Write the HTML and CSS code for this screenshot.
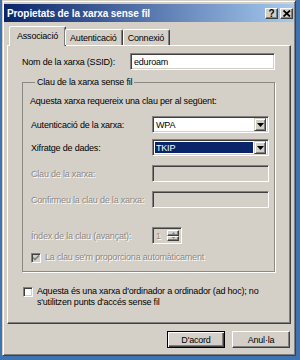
FILE: index.html
```html
<!DOCTYPE html>
<html lang="ca">
<head>
    <meta charset="UTF-8">
    <meta name="viewport" content="width=device-width, initial-scale=1.0">
    <title>Propietats de la xarxa sense fil</title>
    <link rel="stylesheet" href="styles.css">
</head>
<body>
    <div class="window">
        <div class="titlebar">
            <span class="title">Propietats de la xarxa sense fil</span>
            <div class="caption-buttons">
                <span class="cap-btn cap-help">?</span>
                <span class="cap-btn">
                    <svg width="8" height="7" viewBox="0 0 8 7">
                        <path d="M0.5 0.5 L7 6.5 M7 0.5 L0.5 6.5" stroke="#000" stroke-width="1.8" fill="none"/>
                    </svg>
                </span>
            </div>
        </div>

        <div class="tabs">
            <div class="tab active">Associació</div>
            <div class="tab">Autenticació</div>
            <div class="tab">Connexió</div>
        </div>

        <div class="panel">
            <div class="row ssid-row">
                <span class="label">Nom de la xarxa (SSID):</span>
                <div class="field ssid">eduroam</div>
            </div>

            <fieldset class="group">
                <legend>Clau de la xarxa sense fil</legend>
                <p class="note">Aquesta xarxa requereix una clau per al següent:</p>

                <div class="row row-auth">
                    <span class="label">Autenticació de la xarxa:</span>
                    <div class="field combo">
                        <span class="combo-value">WPA</span>
                        <span class="combo-btn">
                            <svg width="7" height="4" viewBox="0 0 7 4"><path d="M0 0 H7 L3.5 4 Z" fill="#000"/></svg>
                        </span>
                    </div>
                </div>

                <div class="row row-cipher">
                    <span class="label">Xifratge de dades:</span>
                    <div class="field combo">
                        <span class="combo-value selected">TKIP</span>
                        <span class="combo-btn">
                            <svg width="7" height="4" viewBox="0 0 7 4"><path d="M0 0 H7 L3.5 4 Z" fill="#000"/></svg>
                        </span>
                    </div>
                </div>

                <div class="row row-key disabled">
                    <span class="label">Clau de la xarxa:</span>
                    <div class="field off"></div>
                </div>

                <div class="row row-confirm disabled">
                    <span class="label">Confirmeu la clau de la xarxa:</span>
                    <div class="field off"></div>
                </div>

                <div class="row row-index disabled">
                    <span class="label">Índex de la clau (avançat):</span>
                    <div class="field off spin">
                        <span class="spin-value">1</span>
                        <span class="spin-btns">
                            <span class="spin-btn">
                                <svg width="3" height="2" viewBox="0 0 3 2"><path d="M0 2 H3 L1.5 0 Z" fill="#808080"/></svg>
                            </span>
                            <span class="spin-btn">
                                <svg width="3" height="2" viewBox="0 0 3 2"><path d="M0 0 H3 L1.5 2 Z" fill="#808080"/></svg>
                            </span>
                        </span>
                    </div>
                </div>

                <div class="check-row auto disabled">
                    <span class="checkbox off">
                        <svg width="8" height="8" viewBox="0 0 8 8"><path d="M1 3.5 L3 5.5 L7 1.5" stroke="#808080" stroke-width="1.6" fill="none"/></svg>
                    </span>
                    <span class="label">La clau se'm proporciona automàticament</span>
                </div>
            </fieldset>

            <div class="check-row adhoc">
                <span class="checkbox"></span>
                <span class="label">Aquesta és una xarxa d'ordinador a ordinador (ad hoc); no<br>s'utilitzen punts d'accés sense fil</span>
            </div>
        </div>

        <div class="buttons">
            <span class="btn default">D'acord</span>
            <span class="btn">Anul·la</span>
        </div>
    </div>
</body>
</html>
```

FILE: styles.css
```css
html, body {
    margin: 0;
    padding: 0;
}

body {
    background: #3f72b0;
    width: 300px;
    height: 360px;
    overflow: hidden;
    font-family: 'Liberation Sans', Arial, sans-serif;
    font-size: 9px;
    letter-spacing: -0.2px;
    color: #000;
}

.window {
    box-sizing: border-box;
    width: 294px;
    height: 356px;
    margin-left: 2px;
    padding: 2px 1px 0;
    background: #d4d0c8;
    border: 1px solid;
    border-color: #d4d0c8 #404040 #404040 #d4d0c8;
    box-shadow: inset 1px 1px #fff, inset -1px -1px #808080;
    display: flex;
    flex-direction: column;
}

/* title bar */
.titlebar {
    height: 18px;
    margin-top: 1px;
    padding: 0 1px 0 3px;
    display: flex;
    align-items: center;
    justify-content: space-between;
    background: linear-gradient(to right, #0a246a, #a6caf0);
}

.title {
    color: #fff;
    font-weight: bold;
    font-size: 10px;
    letter-spacing: -0.1px;
}

.caption-buttons {
    display: flex;
    gap: 2px;
}

.cap-btn {
    box-sizing: border-box;
    width: 13px;
    height: 11px;
    display: flex;
    align-items: center;
    justify-content: center;
    background: #d4d0c8;
    border: 1px solid;
    border-color: #fff #404040 #404040 #fff;
    box-shadow: inset -1px -1px #808080;
}

.cap-help {
    font-weight: bold;
    font-size: 10px;
    line-height: 9px;
}

/* tabs */
.tabs {
    display: flex;
    align-items: flex-end;
    margin: 4px 0 0 7px;
    position: relative;
    z-index: 1;
}

.tab {
    box-sizing: border-box;
    height: 16px;
    padding: 0 5px 0 4px;
    display: flex;
    align-items: center;
    border: 1px solid;
    border-bottom: none;
    border-color: #fff #404040 transparent #fff;
    box-shadow: inset -1px 0 #808080;
    border-radius: 2px 2px 0 0;
}

.tab.active {
    height: 20px;
    margin: 0 -1px -1px -2px;
    padding: 0 7px 2px 7px;
    background: #d4d0c8;
}

/* tab page */
.panel {
    box-sizing: border-box;
    height: 279px;
    margin: 0 3px;
    padding: 7px 15px 0 14px;
    border: 1px solid;
    border-color: #fff #404040 #404040 #fff;
    box-shadow: inset -1px -1px #808080;
}

.row {
    display: flex;
    align-items: center;
}

.row .label {
    flex: 1;
    white-space: nowrap;
}

.group .row .label {
    flex: none;
    width: 121px;
}

.field {
    box-sizing: border-box;
    height: 17px;
    width: 117px;
    padding: 0 3px;
    display: flex;
    align-items: center;
    background: #fff;
    border: 1px solid;
    border-color: #808080 #fff #fff #808080;
    box-shadow: inset 1px 1px #404040, inset -1px -1px #d4d0c8;
}

.field.ssid {
    width: 145px;
}

.field.off {
    background: #d4d0c8;
}

/* group box */
.group {
    margin: 7px 0 0;
    padding: 0 5px 8px 8px;
    border: 1px solid #8c8984;
    box-shadow: 1px 1px 0 #fff;
}

.group legend {
    padding: 0 2px;
    margin-left: 4px;
    line-height: 11px;
}

.note {
    margin: 8px 0 0 -1px;
    line-height: 11px;
}

.row-auth { margin-top: 9px; }
.row-cipher { margin-top: 6px; }
.row-key { margin-top: 9px; }
.row-confirm { margin-top: 9px; }
.row-index { margin-top: 19px; }

.disabled .label {
    color: #8c8984;
    text-shadow: 1px 1px 0 #fff;
}

/* combo box */
.combo {
    padding: 2px;
    justify-content: space-between;
}

.combo-value {
    flex: 1;
    align-self: stretch;
    display: flex;
    align-items: center;
    padding-left: 1px;
}

.combo-value.selected {
    background: #0a246a;
    color: #fff;
    margin-right: 1px;
}

.combo-btn {
    box-sizing: border-box;
    width: 12px;
    height: 13px;
    display: flex;
    align-items: center;
    justify-content: center;
    background: #d4d0c8;
    border: 1px solid;
    border-color: #d4d0c8 #404040 #404040 #d4d0c8;
    box-shadow: inset 1px 1px #fff, inset -1px -1px #808080;
}

/* spin box */
.field.spin {
    width: 30px;
    padding: 2px 2px 2px 3px;
    justify-content: space-between;
}

.spin-value {
    color: #8c8984;
    text-shadow: 1px 1px 0 #fff;
}

.spin-btns {
    display: flex;
    flex-direction: column;
    align-self: stretch;
}

.spin-btn {
    box-sizing: border-box;
    flex: 1;
    width: 12px;
    display: flex;
    align-items: center;
    justify-content: center;
    border: 1px solid;
    border-color: #fff #404040 #404040 #fff;
    box-shadow: inset -1px -1px #808080;
}

/* check boxes */
.check-row {
    display: flex;
    align-items: flex-start;
    gap: 4px;
}

.check-row .label {
    white-space: nowrap;
    line-height: 11px;
}

.checkbox {
    box-sizing: border-box;
    flex: none;
    width: 10px;
    height: 10px;
    display: flex;
    align-items: center;
    justify-content: center;
    background: #fff;
    border: 1px solid;
    border-color: #808080 #fff #fff #808080;
    box-shadow: inset 1px 1px #404040, inset -1px -1px #d4d0c8;
}

.checkbox.off {
    background: #d4d0c8;
}

.auto {
    margin-top: 8px;
}

.auto .checkbox {
    margin-top: 1px;
}

.adhoc {
    margin: 14px 0 0 1px;
}

.adhoc .checkbox {
    margin-top: 1px;
}

/* dialog buttons */
.buttons {
    display: flex;
    justify-content: flex-end;
    gap: 7px;
    margin: 7px 4px 0 0;
}

.btn {
    box-sizing: border-box;
    width: 58px;
    height: 17px;
    display: flex;
    align-items: center;
    justify-content: center;
    border: 1px solid;
    border-color: #fff #404040 #404040 #fff;
    box-shadow: inset -1px -1px #808080;
}

.btn.default {
    border-color: #000;
    box-shadow: inset 1px 1px #fff, inset -1px -1px #404040, inset -2px -2px #808080;
}
```
